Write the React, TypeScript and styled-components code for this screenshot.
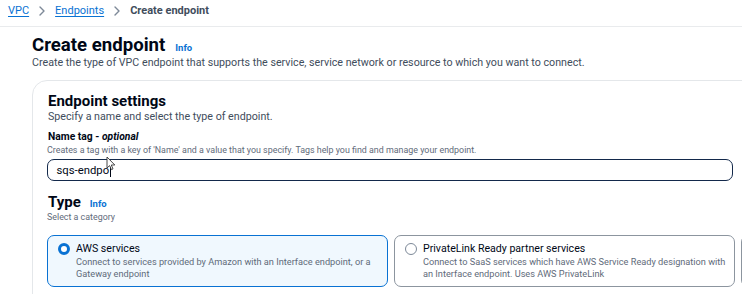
import React from "react";
import styled, { createGlobalStyle } from "styled-components";

const Global = createGlobalStyle`
  html, body { margin: 0; padding: 0; background: #ffffff; overflow: hidden; }
  body { font-family: Roboto, "Open Sans", Arial, sans-serif; color: #000716; }
  * { box-sizing: border-box; }
`;

const Page = styled.div`
  width: 742px;
  height: 294px;
  overflow: hidden;
`;

const Crumbs = styled.nav`
  display: flex;
  align-items: center;
  gap: 10px;
  height: 27px;
  padding: 2px 8px 6px;
  border-bottom: 1px solid #e9ebed;
  font-size: 11px;
  line-height: 14px;
`;

const CrumbLink = styled.a`
  color: #0972d3;
  text-decoration: underline;
  text-underline-offset: 2px;
  text-decoration-thickness: 1px;
`;

const CrumbCurrent = styled.span`
  color: #414d5c;
  font-weight: 700;
`;

const Chevron = styled.svg`
  flex: none;
`;

const Main = styled.div`
  padding: 7px 0 0 32px;
`;

const HeadingRow = styled.div<{ $gap: number; $top?: number }>`
  display: flex;
  align-items: baseline;
  gap: ${(p) => p.$gap}px;
  margin-top: ${(p) => p.$top ?? 0}px;
`;

const Title = styled.h1`
  margin: 0;
  font-size: 18.6px;
  line-height: 22px;
  font-weight: 700;
  color: #000716;
`;

const Info = styled.span`
  color: #0972d3;
  font-weight: 700;
  font-size: 9.5px;
`;

const Desc = styled.p`
  margin: 0;
  font-size: 10.7px;
  line-height: 13px;
  color: #414d5c;
`;

const PageDesc = styled(Desc)`
  line-height: 14px;
`;

const Card = styled.section`
  margin-top: 10px;
  width: 780px;
  min-height: 240px;
  border: 1px solid #e4e7ea;
  border-radius: 15px;
  padding: 11px 0 0 14px;
`;

const SectionTitle = styled.h2`
  margin: 0;
  padding-left: 1px;
  font-size: 15px;
  line-height: 18px;
  font-weight: 700;
  color: #000716;
`;

const SettingsDesc = styled(Desc)`
  padding-left: 1px;
`;

const FieldLabel = styled.div`
  margin-top: 7px;
  padding-left: 1px;
  font-size: 10.3px;
  line-height: 14px;
  font-weight: 700;
  color: #000716;
  em { font-style: italic; }
`;

const Hint = styled.div`
  font-size: 8.9px;
  line-height: 12px;
  color: #5f6b7a;
`;

const InputBox = styled.div`
  position: relative;
  margin-top: 3px;
  width: 686px;
  height: 22px;
  border: 1.5px solid #13294b;
  border-radius: 7px;
  display: flex;
  align-items: center;
  padding-left: 8.5px;
  font-size: 11.3px;
  color: #000716;
`;

const Caret = styled.span`
  display: inline-block;
  width: 1px;
  height: 13px;
  background: #000716;
  margin-left: 0.5px;
`;

const Pointer = styled.svg`
  position: absolute;
  left: 58px;
  top: -4.5px;
`;

const Tiles = styled.div`
  margin-top: 12px;
  display: grid;
  grid-template-columns: repeat(3, 341px);
  gap: 6px;
`;

const Tile = styled.div<{ $selected?: boolean }>`
  display: flex;
  align-items: flex-start;
  gap: 6px;
  height: 52px;
  border-radius: 7px;
  padding: 6px 4px 0 10px;
  border: 1px solid ${(p) => (p.$selected ? "#0972d3" : "#8c959f")};
  background: ${(p) => (p.$selected ? "#f0f8fe" : "#ffffff")};
`;

const Radio = styled.span<{ $checked?: boolean }>`
  flex: none;
  margin-top: 1px;
  width: 12px;
  height: 12px;
  border-radius: 50%;
  border: ${(p) => (p.$checked ? "3.5px solid #0972d3" : "1.3px solid #7d8998")};
  background: #ffffff;
`;

const TileText = styled.div`
  display: flex;
  flex-direction: column;
`;

const TileTitle = styled.div`
  font-size: 10.6px;
  line-height: 14px;
  color: #000716;
`;

const TileDesc = styled.div`
  font-size: 9.2px;
  line-height: 12px;
  color: #5f6b7a;
`;

const Sep = () => (
  <Chevron width="6" height="10" viewBox="0 0 6 10">
    <path d="M1 1 L5 5 L1 9" fill="none" stroke="#7d8998" strokeWidth="1.4" strokeLinecap="round" strokeLinejoin="round" />
  </Chevron>
);

export default function App() {
  return (
    <Page>
      <Global />
      <Crumbs>
        <CrumbLink>VPC</CrumbLink>
        <Sep />
        <CrumbLink>Endpoints</CrumbLink>
        <Sep />
        <CrumbCurrent>Create endpoint</CrumbCurrent>
      </Crumbs>
      <Main>
        <HeadingRow $gap={10}>
          <Title>Create endpoint</Title>
          <Info>Info</Info>
        </HeadingRow>
        <PageDesc>
          Create the type of VPC endpoint that supports the service, service network or resource to which you want to connect.
        </PageDesc>
        <Card>
          <SectionTitle>Endpoint settings</SectionTitle>
          <SettingsDesc>Specify a name and select the type of endpoint.</SettingsDesc>
          <FieldLabel>
            Name tag - <em>optional</em>
          </FieldLabel>
          <Hint>
            Creates a tag with a key of 'Name' and a value that you specify. Tags help you find and manage your endpoint.
          </Hint>
          <InputBox>
            sqs-endpo
            <Caret />
            <Pointer width="10" height="15" viewBox="0 0 10 15">
              <path d="M1 1 L1 12 L3.6 9.6 L5.4 13.6 L7 12.9 L5.3 9 L8.8 9 Z" fill="#ffffff" stroke="#333333" strokeWidth="0.9" strokeLinejoin="round" />
            </Pointer>
          </InputBox>
          <HeadingRow $gap={9} $top={12}>
            <SectionTitle>Type</SectionTitle>
            <Info>Info</Info>
          </HeadingRow>
          <Hint>Select a category</Hint>
          <Tiles>
            <Tile $selected>
              <Radio $checked />
              <TileText>
                <TileTitle>AWS services</TileTitle>
                <TileDesc>
                  Connect to services provided by Amazon with an Interface endpoint, or a Gateway endpoint
                </TileDesc>
              </TileText>
            </Tile>
            <Tile>
              <Radio />
              <TileText>
                <TileTitle>PrivateLink Ready partner services</TileTitle>
                <TileDesc>
                  Connect to SaaS services which have AWS Service Ready designation with an Interface endpoint. Uses AWS PrivateLink
                </TileDesc>
              </TileText>
            </Tile>
            <Tile />
          </Tiles>
        </Card>
      </Main>
    </Page>
  );
}
